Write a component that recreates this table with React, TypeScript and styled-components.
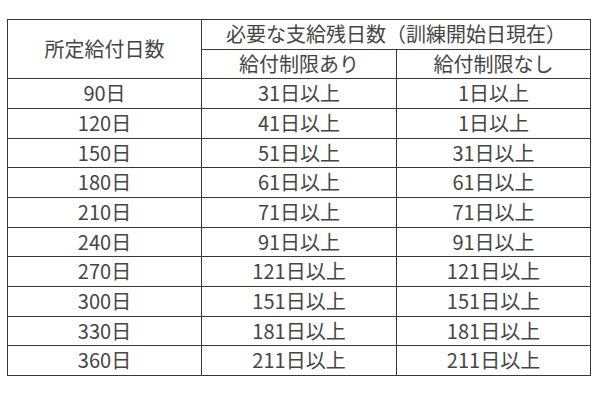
import styled, { createGlobalStyle } from "styled-components";

const GlobalStyle = createGlobalStyle`
	body {
		margin: 0;
		background: #fff;
		font-family: "Noto Sans CJK JP", "Noto Sans", sans-serif;
	}
`;

const rows: [string, string, string][] = [
	["90日", "31日以上", "1日以上"],
	["120日", "41日以上", "1日以上"],
	["150日", "51日以上", "31日以上"],
	["180日", "61日以上", "61日以上"],
	["210日", "71日以上", "71日以上"],
	["240日", "91日以上", "91日以上"],
	["270日", "121日以上", "121日以上"],
	["300日", "151日以上", "151日以上"],
	["330日", "181日以上", "181日以上"],
	["360日", "211日以上", "211日以上"],
];

const App = () => {
	return (
		<>
			<GlobalStyle />
			<Page>
				<Table>
					<colgroup>
						<col width="194" />
						<col width="195" />
						<col width="194" />
					</colgroup>
					<thead>
						<tr>
							<Cell as="th" rowSpan={2}>
								所定給付日数
							</Cell>
							<Cell as="th" colSpan={2}>
								必要な支給残日数（訓練開始日現在）
							</Cell>
						</tr>
						<tr>
							<Cell as="th">給付制限あり</Cell>
							<Cell as="th">給付制限なし</Cell>
						</tr>
					</thead>
					<tbody>
						{rows.map((r) => (
							<tr key={r[0]}>
								<Cell>{r[0]}</Cell>
								<Cell>{r[1]}</Cell>
								<Cell>{r[2]}</Cell>
							</tr>
						))}
					</tbody>
				</Table>
			</Page>
		</>
	);
};

export default App;

const Page = styled.div`
	padding: 19px 0 0 7px;
`;

const Table = styled.table`
	border-collapse: collapse;
	table-layout: fixed;
	width: 584px;
	color: #454545;
`;

const Cell = styled.td`
	border: 1px solid #383838;
	padding: 0;
	font-size: 20px;
	font-weight: 400;
	line-height: 28.67px;
	text-align: center;
	vertical-align: middle;
	white-space: nowrap;
`;
